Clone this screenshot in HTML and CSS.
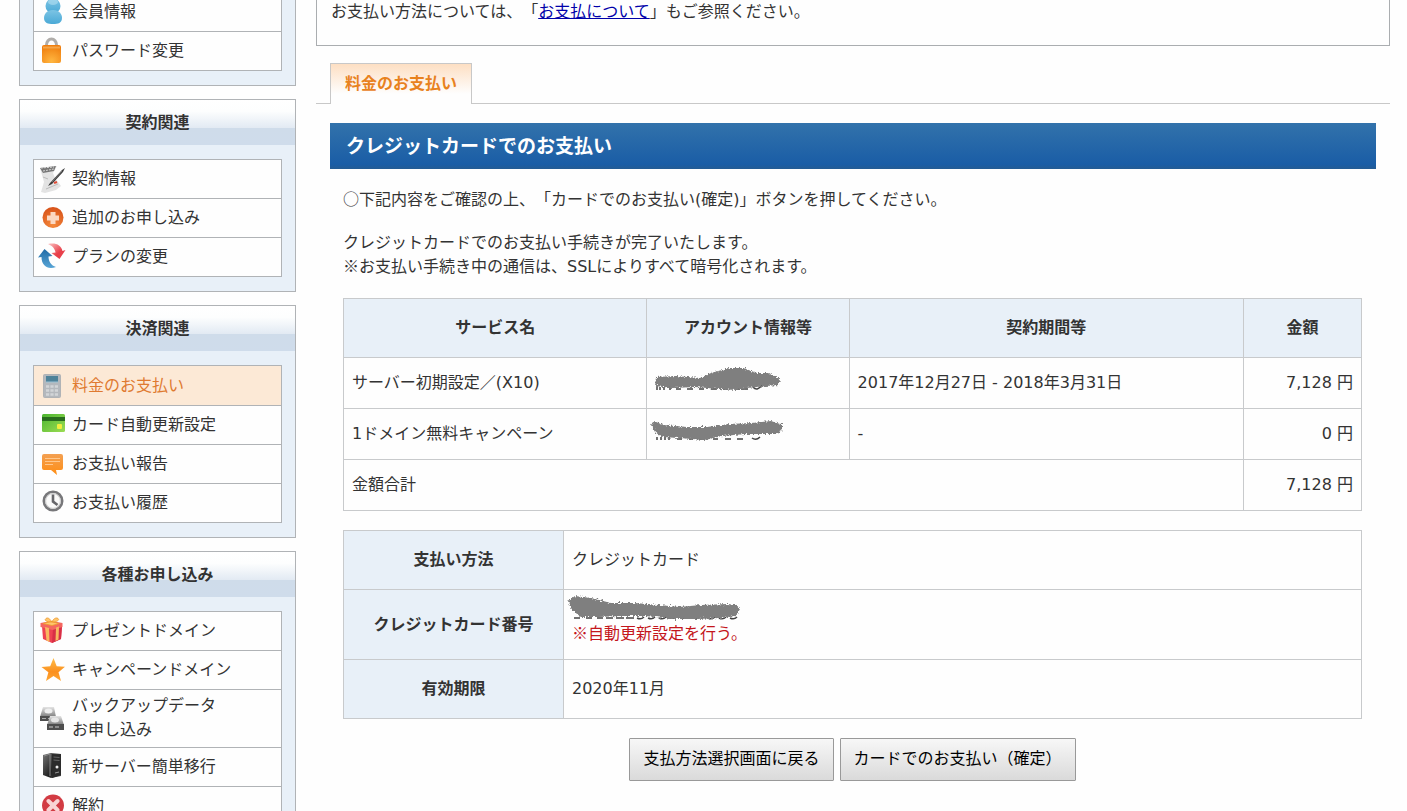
FILE: index.html
```html
<!DOCTYPE html>
<html lang="ja">
<head>
<meta charset="utf-8">
<title>料金のお支払い</title>
<link rel="stylesheet" href="styles.css">
</head>
<body>
<svg class="defs" width="0" height="0" aria-hidden="true">
  <defs>
    <linearGradient id="blue" x1="0" y1="0" x2="0" y2="1"><stop offset="0" stop-color="#7cc4e4"/><stop offset="1" stop-color="#4aa9d6"/></linearGradient>
    <radialGradient id="orange" cx=".5" cy=".9" r=".9"><stop offset="0" stop-color="#ffb640"/><stop offset="1" stop-color="#ef7d0d"/></radialGradient>
    <linearGradient id="bubble" x1="0" y1="0" x2="0" y2="1"><stop offset="0" stop-color="#f3a052"/><stop offset="1" stop-color="#ff8d12"/></linearGradient>
    <radialGradient id="plus" cx=".5" cy=".85" r=".8"><stop offset="0" stop-color="#f58a3c"/><stop offset="1" stop-color="#d9551b"/></radialGradient>
    <linearGradient id="red" x1="0" y1="0" x2="1" y2="1"><stop offset="0" stop-color="#fbc4c4"/><stop offset=".6" stop-color="#e8404a"/></linearGradient>
    <linearGradient id="navy" x1="0" y1="0" x2="0" y2="1"><stop offset="0" stop-color="#1f6aa5"/><stop offset="1" stop-color="#58a5d6"/></linearGradient>
    <linearGradient id="green" x1="0" y1="0" x2="1" y2="1"><stop offset="0" stop-color="#4bb52f"/><stop offset="1" stop-color="#9bdc53"/></linearGradient>
    <linearGradient id="metal" x1="0" y1="0" x2="0" y2="1"><stop offset="0" stop-color="#e4e4e4"/><stop offset="1" stop-color="#7b7b7b"/></linearGradient>
    <linearGradient id="case" x1="0" y1="0" x2="1" y2="1"><stop offset="0" stop-color="#777"/><stop offset=".6" stop-color="#222"/><stop offset="1" stop-color="#555"/></linearGradient>
    <linearGradient id="star" x1="0" y1="0" x2="0" y2="1"><stop offset="0" stop-color="#ffbf4d"/><stop offset=".6" stop-color="#fb8f1d"/><stop offset="1" stop-color="#ffa733"/></linearGradient>
    <filter id="rough" x="-5%" y="-20%" width="110%" height="140%"><feTurbulence type="fractalNoise" baseFrequency=".6" numOctaves="2" seed="4"/><feDisplacementMap in="SourceGraphic" scale="5" xChannelSelector="R" yChannelSelector="G"/></filter>
  </defs>
</svg>
<div class="page">
  <nav class="sidebar">
    <section class="box box-cut">
      <ul class="menu menu-cut">
        <li><a href="#"><svg class="icon" viewBox="0 0 28 28"><circle cx="15" cy="8" r="7.500" fill="url(#blue)"/><path d="M15 12c6 0 9 4 9 8 0 5-4 6-9 6s-9-1-9-6c0-4 3-8 9-8z" fill="url(#blue)"/><ellipse cx="15" cy="4" rx="5" ry="3" fill="#c4e8f5" opacity=".5"/></svg><span>会員情報</span></a></li>
        <li><a href="#"><svg class="icon" viewBox="0 0 28 28"><path d="M8.500 12V8a5 6 0 0 1 10 0v4" fill="none" stroke="#b0adaa" stroke-width="3"/><rect x="4" y="8" width="19" height="18" rx="2" fill="url(#orange)"/><path d="M5 10.500h17" stroke="#f5a548" stroke-width="2"/></svg><span>パスワード変更</span></a></li>
      </ul>
    </section>
    <section class="box">
      <h2 class="box-title">契約関連</h2>
      <ul class="menu">
        <li><a href="#"><svg class="icon" viewBox="0 0 28 28"><path d="M2 3l17-2-4 7 2 5 6 8-5 4-11 3-4-1 3-10z" fill="#e3e3e3"/><path d="M2 3l16-2-2 5-11 2z" fill="#777"/><path d="M3 3l13-1M5 6l11-2" stroke="#d8d8d8" stroke-dasharray="2 1"/><path d="M5 12l5 2M8 24l12-5" stroke="#bbb"/><path d="M12 18l12-13 3-2-2 4-11 12-4 2z" fill="#3c3c3c"/><path d="M14 17l10-11" stroke="#777"/><path d="M16 18l3-1" stroke="#e04a35" stroke-width="2"/></svg><span>契約情報</span></a></li>
        <li><a href="#"><svg class="icon" viewBox="0 0 28 28"><circle cx="15" cy="13.500" r="10.500" fill="url(#plus)"/><path d="M12.500 8h5v3.500H21v5h-3.500V20h-5v-3.500H9v-5h3.500z" fill="#fbd8c2"/></svg><span>追加のお申し込み</span></a></li>
        <li><a href="#"><svg class="icon" viewBox="0 0 28 28"><path d="M10 1c8-1.500 13 1 14.500 7l3-1-6 9-8-6 4-.5C17 5.500 14 2.500 10 1z" fill="url(#red)"/><path d="M18 24C10 27 3.500 23 3.500 14L0 14.500 6.500 6l8 7-4 .5C10.500 18.500 13 22.500 18 24z" fill="url(#navy)"/></svg><span>プランの変更</span></a></li>
      </ul>
    </section>
    <section class="box">
      <h2 class="box-title">決済関連</h2>
      <ul class="menu">
        <li><a class="current" href="#" aria-current="page"><svg class="icon" viewBox="0 0 28 28"><rect x="5.500" y="2.500" width="17" height="23" rx="1" fill="#b4b8bd" stroke="#b0b3b6"/><rect x="8" y="4" width="12" height="6" fill="#4e8299"/><path d="M8 10h12" stroke="#9cc3d6"/><path d="M8 14.500h12M8 18.500h12M8 22.500h12" stroke="#d2d5d8" stroke-width="2.500" stroke-dasharray="3.200 1.200"/></svg><span>料金のお支払い</span></a></li>
        <li><a href="#"><svg class="icon" viewBox="0 0 28 28"><rect x="4" y="3" width="23" height="18" rx="1.500" fill="url(#green)"/><rect x="4" y="6" width="23" height="4" fill="#286c1d"/><rect x="19" y="13" width="5" height="5" rx="1" fill="#f1ee3d"/></svg><span>カード自動更新設定</span></a></li>
        <li><a href="#"><svg class="icon" viewBox="0 0 28 28"><path d="M6 4h17a2 2 0 0 1 2 2v12a2 2 0 0 1-2 2h-5l1 5-6-5H6a2 2 0 0 1-2-2V6a2 2 0 0 1 2-2z" fill="url(#bubble)"/><path d="M7 8.500h15M7 11.500h15M7 14.500h8" stroke="#ffc78c" stroke-width="1.200"/></svg><span>お支払い報告</span></a></li>
        <li><a href="#"><svg class="icon" viewBox="0 0 28 28"><circle cx="15" cy="12" r="9.200" fill="#fafafa" stroke="#77777a" stroke-width="2.600"/><circle cx="15" cy="12" r="7.400" fill="none" stroke="#ccc"/><path d="M15 5.500v7l4.500 3.500" fill="none" stroke="#66666a" stroke-width="2.600"/></svg><span>お支払い履歴</span></a></li>
      </ul>
    </section>
    <section class="box">
      <h2 class="box-title">各種お申し込み</h2>
      <ul class="menu">
        <li><a href="#"><svg class="icon" viewBox="0 0 28 28"><path d="M4 9l11 2 9-2-1 13-9 4-9-4z" fill="#ee4152"/><path d="M15 11l9-2-1 13-9 4z" fill="#d82f46"/><path d="M2.500 6l11-2 11 2v4l-10 3-12-3z" fill="#f4665f"/><path d="M7 10l4 1 .5 14-3-1.500zM18 10.500l3-1-.5 13-3 1.500z" fill="#f8b760"/><path d="M5 6.500l8-2 8 2-7 2zM13 5C8 5 6 3 8 1.500S12 2 14 5c1-3 4-5 6-3.500S19 5 14 5z" fill="#ffc56b" stroke="#ee9a2e" stroke-width=".8"/></svg><span>プレゼントドメイン</span></a></li>
        <li><a href="#"><svg class="icon" viewBox="0 0 28 28"><path d="M15.500 2l3.200 8.200 8.300.6-6.500 5.400 2.500 8.800-7.500-5-7.500 5 2.400-8.800L3.500 11l8.700-.8z" fill="url(#star)"/></svg><span>キャンペーンドメイン</span></a></li>
        <li><a class="two-line" href="#"><svg class="icon" viewBox="0 0 28 28"><path d="M5 3h11l2 10H2z" fill="url(#metal)"/><ellipse cx="10.500" cy="7" rx="4" ry="2.500" fill="#eee"/><path d="M2 12h16v5H2z" fill="#4d4d4d"/><path d="M4 14.500h12" stroke="#aaa" stroke-dasharray="4 2"/><path d="M12 12h11l3 9H9z" fill="url(#metal)"/><ellipse cx="17" cy="16" rx="4" ry="2.500" fill="#e6e6e6"/><path d="M9 20h17v6H9z" fill="#4d4d4d"/><path d="M11 23h12" stroke="#ccc" stroke-dasharray="4 2"/></svg><span>バックアップデータ<br>お申し込み</span></a></li>
        <li><a href="#"><svg class="icon" viewBox="0 0 28 28"><path d="M5 2l8-2 10 1v22l-10 2-8-3z" fill="url(#case)"/><path d="M14 1l9 1v20l-9 3z" fill="#2b2b2b"/><path d="M15.500 4l6 .5M15.500 7l6 .5" stroke="#666"/><circle cx="19" cy="14" r="1.500" fill="#eee"/><path d="M17 20l4-1" stroke="#999"/><path d="M6 3l6-2v22" fill="none" stroke="#8a8a8a"/></svg><span>新サーバー簡単移行</span></a></li>
        <li><a href="#"><svg class="icon" viewBox="0 0 28 28"><circle cx="15" cy="13.500" r="11" fill="#d23b43"/><path d="M10.500 9l9 9M19.500 9l-9 9" stroke="#f9d3d3" stroke-width="4" stroke-linecap="round"/></svg><span>解約</span></a></li>
      </ul>
    </section>
  </nav>
  <main class="main">
    <div class="notice">お支払い方法については、「<a href="#">お支払について</a>」もご参照ください。</div>
    <div class="tabs"><a class="tab" href="#" aria-current="page">料金のお支払い</a></div>
    <div class="content">
      <h1 class="heading">クレジットカードでのお支払い</h1>
      <div class="inner">
        <p><span class="symbol">○</span>下記内容をご確認の上、「カードでのお支払い(確定)」ボタンを押してください。</p>
        <p>クレジットカードでのお支払い手続きが完了いたします。<br><span class="symbol">※</span>お支払い手続き中の通信は、SSLによりすべて暗号化されます。</p>
        <table class="table services">
          <thead>
            <tr><th class="col-service" scope="col">サービス名</th><th class="col-account" scope="col">アカウント情報等</th><th class="col-period" scope="col">契約期間等</th><th class="col-price" scope="col">金額</th></tr>
          </thead>
          <tbody>
            <tr><td>サーバー初期設定／(X10)</td><td><svg class="mask" width="128" height="24" viewBox="0 0 128 24"><path d="M2 15v4M5 16v3M9 16v3M15 15v4M21 18h5M32 18h6M44 18h5M56 18h6M68 18h5M80 18h5M86 18h7M98 16q4 5 9-2" fill="none" stroke="#444" stroke-width="1.500"/><path filter="url(#rough)" d="M1 6l20-1 24 2 11-5 18-5 14 0 14 5 12 0 11 6-1 6-12 1-20 2-11 2-18-1-22-2-24 1-17-2z" fill="#7f7f7f"/></svg></td><td>2017年12月27日 - 2018年3月31日</td><td class="price">7,128 円</td></tr>
            <tr><td>1ドメイン無料キャンペーン</td><td><svg class="mask" width="128" height="24" viewBox="0 0 128 24"><path d="M2 15v3M6 15v3M10 15v3M14 15v3M22 17h5M34 17h4M44 17h6M58 17h5M70 17h6M82 17h6M97 16q4 3 8-1" fill="none" stroke="#444" stroke-width="1.500"/><path filter="url(#rough)" d="M-4 3l3-4 9 4 24 2 20 0 22-3 22-1 20-2 9 3 2-2 0 8-6 4-10 0-20 0-24 2-18 4-25-2-17-1-7-5z" fill="#7f7f7f"/></svg></td><td>-</td><td class="price">0 円</td></tr>
            <tr><td colspan="3">金額合計</td><td class="price">7,128 円</td></tr>
          </tbody>
        </table>
        <table class="table payment">
          <tbody>
            <tr><th class="col-label" scope="row">支払い方法</th><td>クレジットカード</td></tr>
            <tr><th scope="row">クレジットカード番号</th><td class="card-cell"><svg class="mask" width="168" height="24" viewBox="0 0 168 24"><path d="M2 20h6M14 20h6M25 20h6M34 20h7M44 20h8M54 20h8M65 20q4 2 7-1M76 20q4 2 7-1M87 20q4 2 7-1M98 20h5M108 20h6M119 20h6M130 19v2M136 20q4 2 7-1M147 20q4 2 7-1M158 20q4 2 7-1" fill="none" stroke="#444" stroke-width="1.500"/><path filter="url(#rough)" d="M-4 3l7-5 16 2 20 5 24 0 24 2 20 2 22-2 26-1 10 1 3 4-4 7-15 2-24 1-22 0-30-3-26 0-20 1-18 0-9-7z" fill="#7f7f7f"/></svg><a class="warning" href="#"><span class="symbol">※</span>自動更新設定を行う。</a></td></tr>
            <tr><th scope="row">有効期限</th><td>2020年11月</td></tr>
          </tbody>
        </table>
        <div class="actions"><button type="button">支払方法選択画面に戻る</button><button type="button">カードでのお支払い（確定）</button></div>
      </div>
    </div>
  </main>
</div>
</body>
</html>
```
FILE: styles.css
```css
* { box-sizing: border-box; }
body {
  margin: 0;
  background: #fefefe;
  color: #333;
  font: 16px/24px "DejaVu Sans", "Noto Sans CJK JP", sans-serif;
  text-spacing-trim: space-all;
}
.defs { position: absolute; }
.page {
  display: flex;
  align-items: flex-start;
  gap: 20px;
  height: 100vh;
  overflow: hidden;
  padding: 0 17px 0 19px;
}
.sidebar {
  flex: 0 0 277px;
  display: flex;
  flex-direction: column;
  gap: 13px;
}
.box { border: 1px solid #b0b3b6; background: #e8f0f8; }
.box-title {
  margin: 0;
  padding: 11px 0 10px;
  text-align: center;
  font-size: 16px;
  line-height: 24px;
  background: linear-gradient(#fff 0%, #fdfefe 25%, #e2eaf3 62%, #cfdcea 63%, #cfdceb 100%);
}
.menu {
  list-style: none;
  margin: 14px 13px;
  padding: 0;
  border: 1px solid #b0b3b6;
  background: #fefefe;
}
.menu li + li { border-top: 1px solid #b0b3b6; }
.menu a {
  display: flex;
  align-items: center;
  gap: 6px;
  padding: 7px 4px;
  color: #333;
  text-decoration: none;
}
.menu .current { padding-top: 8px; background: #fce9d6; color: #df7a30; }
.menu .two-line { padding: 4px 4px 5px; }
.box-cut { border-top: 0; }
.menu-cut { margin-top: 0; border-top: 0; }
.menu-cut li:first-child a { padding-top: 0; }
.icon { flex: none; width: 28px; height: 28px; margin: -2px 0; }
.symbol { font-family: "Noto Sans CJK JP", sans-serif; line-height: 16px; }

.main { flex: 1; min-width: 0; }
.notice {
  padding: 0 14px 21px;
  border: 1px solid #aaadb0;
  border-top: 0;
}
.notice a { color: #00a; }
.tabs {
  display: flex;
  margin-top: 17px;
  padding: 0 14px;
  border-bottom: 1px solid #c8c8c8;
}
.tab {
  margin-bottom: -1px;
  padding: 8px 14px;
  border: 1px solid #c8c8c8;
  border-bottom: 0;
  background: linear-gradient(#fddfc3, #fefefe 75%);
  color: #e8821e;
  font-weight: bold;
  text-decoration: none;
}
.content { padding: 19px 14px; }
.heading {
  margin: 0;
  padding: 11px 16px;
  background: linear-gradient(#3272ab, #1a5da6 90%, #245b93);
  color: #fff;
  font-size: 19px;
  line-height: 24px;
}
.inner { padding: 0 14px 0 13px; }
.inner p { margin: 19px 0; }
.table {
  width: 100%;
  margin: 0 0 19px;
  border-collapse: collapse;
  table-layout: fixed;
}
.table th, .table td { border: 1px solid #c8cacc; }
.table td { padding: 13px 8px; }
.table th { padding: 17px 8px; background: #e8f0f8; }
.col-service { width: 30%; }
.col-account { width: 20%; }
.col-period { width: 39%; }
.col-price { width: 118px; }
.col-label { width: 220px; }
.price { text-align: right; }
.table .card-cell { padding: 8px 8px 13px; }
.mask { display: block; overflow: visible; }
.warning { color: #c4161c; text-decoration: none; }
.actions { display: flex; justify-content: center; gap: 6px; }
.actions button {
  padding: 8px 13px 9px;
  border: 1px solid #999;
  border-radius: 1px;
  background: linear-gradient(#f7f7f7, #dadada);
  color: #000;
  font: inherit;
}
```
